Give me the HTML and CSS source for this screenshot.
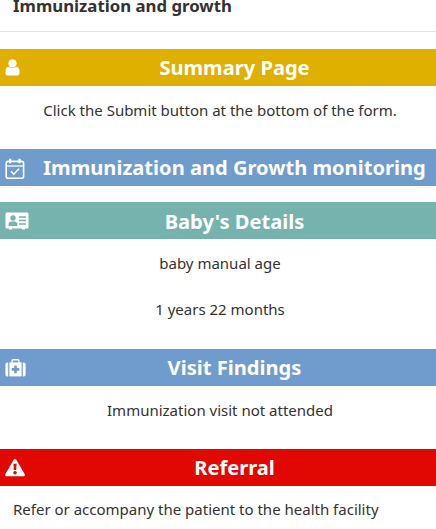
FILE: index.html
```html
<!DOCTYPE html>
<html lang="en">
<head>
    <meta charset="UTF-8">
    <meta name="viewport" content="width=device-width, initial-scale=1.0">
    <title>Immunization and growth</title>
    <link rel="stylesheet" href="styles.css">
</head>
<body>

    <div class="page-header">
        <h1>Immunization and growth</h1>
    </div>

    <div class="section-bar bar-summary">
        <svg class="bar-icon icon-user" viewBox="0 0 16 18" width="15" height="17">
            <circle cx="8" cy="4.6" r="4.4" fill="#fff"/>
            <path d="M3.6 8.2 C5 9.8 11 9.8 12.4 8.2 C14.4 8.6 15.4 10.4 15.4 12.4 V15 C15.4 16.6 14.4 17.4 13 17.4 H3 C1.6 17.4 .6 16.6 .6 15 V12.4 C.6 10.4 1.6 8.6 3.6 8.2 Z" fill="#fff"/>
        </svg>
        <h2>Summary Page</h2>
    </div>
    <p class="section-text summary-text">Click the Submit button at the bottom of the form.</p>

    <div class="section-bar bar-blue monitoring">
        <svg class="bar-icon icon-calendar" viewBox="0 0 20 21" width="20" height="21" fill="none" stroke="#fff">
            <rect x="1.2" y="3.4" width="17.4" height="16.8" rx="2" stroke-width="1.6"/>
            <path d="M1 8 H18.6" stroke-width="1.3"/>
            <path d="M5.2 .8 V5.2 M14.6 .8 V5.2" stroke-width="2.2"/>
            <path d="M6 13.4 L8.8 16.2 L14 10.8" stroke-width="1.6"/>
        </svg>
        <h2>Immunization and Growth monitoring</h2>
    </div>

    <div class="section-bar bar-teal details">
        <svg class="bar-icon icon-card" viewBox="0 0 24 18" width="24" height="18">
            <path d="M2 .5 H22 C23 .5 23.5 1 23.5 2 V15 C23.5 16 23 16.5 22 16.5 H20 V17.5 H17 V16.5 H7 V17.5 H4 V16.5 H2 C1 16.5 .5 16 .5 15 V2 C.5 1 1 .5 2 .5 Z" fill="#fff"/>
            <circle cx="8" cy="6" r="2.7" fill="#76b2ae"/>
            <path d="M3.6 14 V12 C3.6 10.2 5 9.4 6.2 9.4 H9.8 C11 9.4 12.4 10.2 12.4 12 V14 Z" fill="#76b2ae"/>
            <path d="M14 5 H21 M14 8.5 H21 M14 12 H21" stroke="#76b2ae" stroke-width="1.5"/>
        </svg>
        <h2>Baby's Details</h2>
    </div>
    <p class="section-text manual-age">baby manual age</p>
    <p class="section-text age-value">1 years 22 months</p>

    <div class="section-bar bar-blue findings">
        <svg class="bar-icon icon-kit" viewBox="0 0 21 18" width="21" height="18">
            <path d="M7 4 V2 C7 1.2 7.6 .8 8.2 .8 H12.8 C13.4 .8 14 1.2 14 2 V4" fill="none" stroke="#fff" stroke-width="1.4"/>
            <rect x="4.4" y="3.4" width="12.2" height="14" fill="#fff"/>
            <path d="M3.2 3.4 V17.4 H2.4 C1.2 17.4 .4 16.6 .4 15.4 V5.4 C.4 4.2 1.2 3.4 2.4 3.4 Z M17.8 3.4 V17.4 H18.6 C19.8 17.4 20.6 16.6 20.6 15.4 V5.4 C20.6 4.2 19.8 3.4 18.6 3.4 Z" fill="#fff"/>
            <path d="M10.5 6.6 V14.2 M6.7 10.4 H14.3" stroke="#6f9ccd" stroke-width="2.6"/>
        </svg>
        <h2>Visit Findings</h2>
    </div>
    <p class="section-text visit-text">Immunization visit not attended</p>

    <div class="section-bar bar-red referral">
        <svg class="bar-icon" viewBox="0 0 20 18" width="20" height="19">
            <path d="M10 .4 C10.6 .4 11 .7 11.3 1.2 L19.6 15.6 C20.2 16.7 19.5 17.8 18.3 17.8 H1.7 C.5 17.8 -.2 16.7 .4 15.6 L8.7 1.2 C9 .7 9.4 .4 10 .4 Z" fill="#fff"/>
            <path d="M8.4 5.2 H11.6 L11.2 11.6 H8.8 Z" fill="#e00800"/>
            <circle cx="10" cy="14.2" r="1.8" fill="#e00800"/>
        </svg>
        <h2>Referral</h2>
    </div>
    <p class="section-text referral-text">Refer or accompany the patient to the health facility</p>

</body>
</html>
```

FILE: styles.css
```css
/* Reset and Body Styling */
* {
    margin: 0;
    padding: 0;
    box-sizing: border-box;
}
html, body {
    height: 529px;
    overflow: hidden;
}
body {
    font-family: 'Noto Sans', 'Open Sans', sans-serif;
    background-color: #ffffff;
    color: #333333;
    font-size: 15px;
    line-height: 22px;
}

/* Page Header (scrolled partly out of view) */
.page-header {
    height: 32px;
    margin-bottom: 17px;
    padding: 0 13px;
    border-bottom: 1px solid #e2e2e2;
    overflow: hidden;
}
.page-header h1 {
    margin-top: -7px;
    font-size: 16.8px;
    line-height: 26px;
    font-weight: 700;
}

/* Coloured Section Bars */
.section-bar {
    position: relative;
    height: 37px;
    display: flex;
    align-items: center;
    justify-content: center;
    padding-left: 33px;
    color: #ffffff;
}
.section-bar h2 {
    font-size: 20.1px;
    font-weight: 700;
    line-height: 37px;
    white-space: nowrap;
}
.bar-icon {
    position: absolute;
    left: 5px;
    top: 9px;
}
.icon-user,
.icon-card,
.icon-kit {
    top: 10px;
}
.bar-summary {
    background-color: #e0b000;
}
.bar-blue {
    background-color: #6f9ccd;
}
.bar-teal {
    background-color: #76b2ae;
}
.bar-red {
    background-color: #e00800;
}

/* Section Text */
.section-text {
    text-align: center;
    padding-left: 4px;
}
.summary-text {
    padding-top: 13px;
    height: 63px;
}
.details {
    margin-top: 16px;
}
.details h2 {
    padding-top: 1px;
}
.manual-age {
    padding-top: 13px;
    height: 50px;
}
.age-value {
    padding-top: 9px;
    height: 60px;
}
.visit-text {
    padding-top: 13px;
    height: 63px;
}
.referral-text {
    padding: 12px 13px 0;
    text-align: left;
}
```
